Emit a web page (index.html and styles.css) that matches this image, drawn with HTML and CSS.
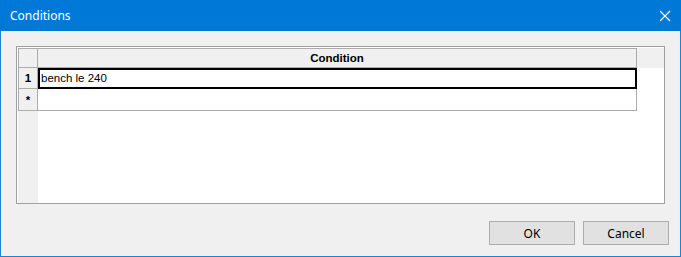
FILE: index.html
```html
<!DOCTYPE html>
<html>
<head>
<meta charset="utf-8">
<title>Conditions</title>
<link rel="stylesheet" href="styles.css">
</head>
<body>
<div class="window">
  <div class="titlebar">
    <span class="title">Conditions</span>
    <svg class="close" width="12" height="12" viewBox="0 0 12 12"><path d="M1 1 L11 11 M11 1 L1 11" stroke="#fff" stroke-width="1.2" fill="none"/></svg>
  </div>
  <div class="content">
    <div class="grid">
      <div class="grid-inner">
        <table class="table">
          <tr class="hdr">
            <td class="rh"></td>
            <td class="ch">Condition</td>
          </tr>
          <tr class="row">
            <td class="rh">1</td>
            <td class="cell sel">bench le 240</td>
          </tr>
          <tr class="row new">
            <td class="rh">*</td>
            <td class="cell"></td>
          </tr>
        </table>
      </div>
    </div>
    <div class="buttons">
      <button class="btn">OK</button>
      <button class="btn">Cancel</button>
    </div>
  </div>
</div>
</body>
</html>
```
FILE: styles.css
```css
html, body {
  margin: 0;
  padding: 0;
  background: #f0f0f0;
}
.window {
  width: 681px;
  height: 257px;
  display: flex;
  flex-direction: column;
  box-sizing: border-box;
}
.titlebar {
  height: 31px;
  background: #0078d7;
  display: flex;
  align-items: center;
  justify-content: space-between;
  padding: 0 10px 0 10px;
  flex: none;
}
.title {
  color: #fff;
  font-family: "Noto Sans", "Open Sans", sans-serif;
  font-size: 12px;
  margin-top: -1px;
}
.content {
  flex: 1;
  border: 1px solid #1883d7;
  border-top: none;
  background: #f0f0f0;
  padding: 15px 10px 0 15px;
  display: flex;
  flex-direction: column;
}
.grid {
  width: 649px;
  height: 158px;
  box-sizing: border-box;
  border: 1px solid #a0a0a0;
  background: #fff;
  padding: 1px 0 0 1px;
}
.grid-inner {
  height: 100%;
  background:
    linear-gradient(#f0f0f0, #f0f0f0) left top / 20px 100% no-repeat,
    linear-gradient(#f0f0f0, #f0f0f0) left top / 100% 20px no-repeat,
    #fff;
}
.table {
  border-collapse: separate;
  border-spacing: 0;
  border-top: 1px solid #acacac;
  border-left: 1px solid #acacac;
  font-family: "Liberation Sans", Arial, sans-serif;
  font-size: 11.5px;
  color: #000;
}
.table td {
  border-right: 1px solid #acacac;
  border-bottom: 1px solid #acacac;
  padding: 0;
  box-sizing: border-box;
}
.rh {
  width: 19px;
  background: #f0f0f0;
  text-align: center;
  font-weight: bold;
}
.ch {
  width: 599px;
  background: #f0f0f0;
  text-align: center;
  font-weight: bold;
}
.hdr td { height: 19px; }
.row td { height: 21px; }
.row.new td { height: 22px; }
.cell {
  background: #fff;
  padding-left: 3px !important;
}
.cell.sel {
  border-right-color: #000 !important;
  border-bottom-color: #000 !important;
  box-shadow: inset 2px 2px 0 #000, inset -1px -1px 0 #000;
}
.buttons {
  display: flex;
  justify-content: flex-end;
  gap: 8px;
  margin-top: 17px;
  margin-right: 1px;
}
.btn {
  width: 86px;
  height: 24px;
  background: #e1e1e1;
  border: 1px solid #adadad;
  font-family: "Noto Sans", "Open Sans", sans-serif;
  font-size: 12px;
  color: #000;
  padding: 0;
  margin: 0;
}
```
